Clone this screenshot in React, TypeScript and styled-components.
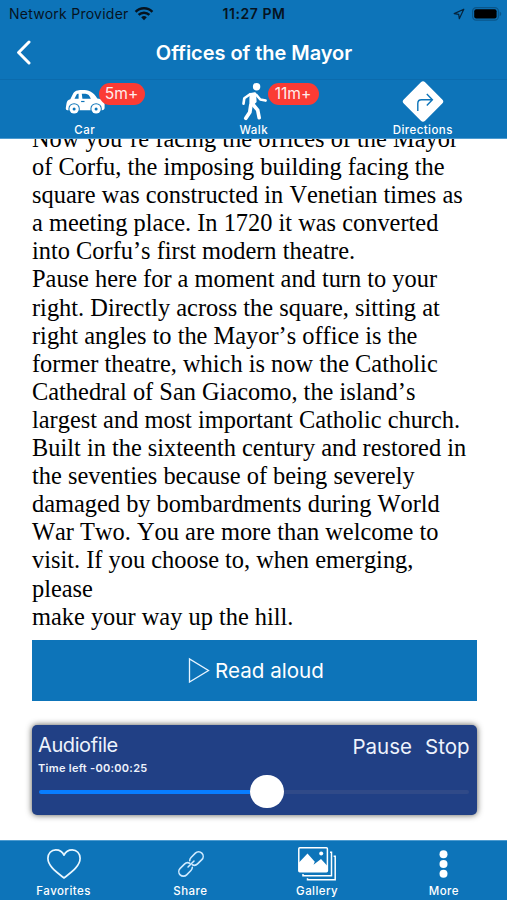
import React from 'react';
import styled, { createGlobalStyle } from 'styled-components';

const GlobalStyle = createGlobalStyle`
  * { box-sizing: border-box; }
  html, body { margin: 0; padding: 0; background: #fff; }
  button { border: 0; background: none; padding: 0; margin: 0; font: inherit; color: inherit; }
`;

const blue = '#0d74b9';

const Screen = styled.div`
  width: 507px;
  height: 900px;
  display: flex;
  flex-direction: column;
  overflow: hidden;
  background: #fff;
  color: #fff;
  font-family: Inter, sans-serif;
`;

const StatusBar = styled.div`
  height: 28px;
  flex: none;
  display: grid;
  grid-template-columns: 1fr auto 1fr;
  align-items: center;
  padding: 0 5px 1px 9px;
  background: ${blue};
  color: #06131f;
  font-size: 14px;
  line-height: 17px;
`;

const Carrier = styled.div`
  display: flex;
  align-items: center;
  gap: 5px;
  letter-spacing: 0.25px;
`;

const Clock = styled.div`
  font-weight: 600;
  letter-spacing: 0.55px;
  padding-right: 3px;
`;

const StatusIcons = styled.div`
  display: flex;
  justify-content: flex-end;
  align-items: center;
  gap: 7px;
`;

const NavBar = styled.header`
  height: 51px;
  flex: none;
  display: grid;
  grid-template-columns: 40px 1fr 40px;
  align-items: center;
  padding: 0 0 2px;
  background: ${blue};
`;

const BackButton = styled.button`
  display: flex;
  padding-left: 15px;
`;

const Title = styled.h1`
  margin: 0;
  padding-left: 1px;
  text-align: center;
  font-size: 20px;
  line-height: 24px;
  font-weight: 600;
  letter-spacing: -0.05px;
`;

const RouteBar = styled.nav`
  height: 60px;
  flex: none;
  display: grid;
  grid-template-columns: repeat(3, 1fr);
  background: ${blue};
  border-top: 1px solid #0b6bad;
  border-bottom: 1px solid #4d9bd0;
`;

const RouteItem = styled.button`
  display: flex;
  flex-direction: column;
  align-items: center;
`;

const RouteIcon = styled.span`
  position: relative;
  height: 43px;
  display: flex;
  align-items: center;
  justify-content: center;
`;

const Badge = styled.span<{ $left: number; $width: number }>`
  position: absolute;
  left: ${(p) => p.$left}px;
  top: 3px;
  width: ${(p) => p.$width}px;
  height: 22px;
  border-radius: 11px;
  background: #fb3b34;
  color: #ffeceb;
  font-size: 15.6px;
  line-height: 22px;
  text-align: center;
`;

const Caption = styled.span`
  font-size: 11.5px;
  line-height: 14px;
  font-weight: 500;
  letter-spacing: 0.45px;
  padding-left: 0.5px;
`;

const Content = styled.main`
  height: 701px;
  flex: none;
  display: flex;
  flex-direction: column;
  padding: 0 30.5px 0 31.5px;
  overflow: hidden;
`;

const Article = styled.article`
  flex: none;
  margin-top: -14px;
  padding-left: 0.5px;
  color: #000;
  font-family: 'Liberation Serif', serif;
  font-size: 24.4px;
  line-height: 28.1px;
  font-kerning: none;
  font-variant-ligatures: none;
  white-space: nowrap;
`;

const Line = styled.div`
  height: 28.1px;
`;

const ReadAloud = styled.button`
  flex: none;
  height: 61px;
  margin-top: 9px;
  display: flex;
  align-items: center;
  justify-content: center;
  gap: 5px;
  background: ${blue};
  font-size: 20.6px;
  padding-left: 4px;
`;

const Player = styled.section`
  flex: none;
  height: 90px;
  margin-top: 24.6px;
  padding: 7.5px 7px 0 6.5px;
  border-radius: 5px;
  background: #214085;
  box-shadow: 0 0 6px rgba(30, 30, 20, 0.75);
  color: #eef3fc;
`;

const PlayerHead = styled.div`
  display: flex;
  justify-content: space-between;
  height: 28px;
`;

const PlayerTitle = styled.div`
  font-size: 20px;
  line-height: 24px;
  letter-spacing: -0.4px;
`;

const PlayerActions = styled.div`
  display: flex;
  gap: 13px;
  padding-top: 1px;
  font-size: 20.5px;
  line-height: 24px;
`;

const TimeLeft = styled.div`
  font-size: 11px;
  line-height: 14px;
  font-weight: 600;
  letter-spacing: 0.28px;
`;

const Slider = styled.div`
  height: 34px;
  display: flex;
  align-items: center;
`;

const Elapsed = styled.div`
  width: 211px;
  height: 4px;
  margin-left: 1px;
  border-radius: 2px 0 0 2px;
  background: #087dff;
`;

const Thumb = styled.div`
  width: 33.5px;
  height: 33.5px;
  margin-top: -1px;
  border-radius: 50%;
  background: #fff;
`;

const Remaining = styled.div`
  flex: 1;
  height: 4px;
  margin-right: 1px;
  border-radius: 0 2px 2px 0;
  background: #304a88;
`;

const TabBar = styled.footer`
  height: 60px;
  flex: none;
  display: grid;
  grid-template-columns: repeat(4, 1fr);
  background: ${blue};
  border-top: 1px solid #4d9bd0;
`;

const Tab = styled.button`
  display: flex;
  flex-direction: column;
  align-items: center;
`;

const TabIcon = styled.span`
  height: 43px;
  display: flex;
  align-items: center;
  justify-content: center;
  padding: 2px 0 0 1px;
`;

const lines = [
  'Now you’re facing the offices of the Mayor',
  'of Corfu, the imposing building facing the',
  'square was constructed in Venetian times as',
  'a meeting place. In 1720 it was converted',
  'into Corfu’s first modern theatre.',
  'Pause here for a moment and turn to your',
  'right. Directly across the square, sitting at',
  'right angles to the Mayor’s office is the',
  'former theatre, which is now the Catholic',
  'Cathedral of San Giacomo, the island’s',
  'largest and most important Catholic church.',
  'Built in the sixteenth century and restored in',
  'the seventies because of being severely',
  'damaged by bombardments during World',
  'War Two. You are more than welcome to',
  'visit. If you choose to, when emerging,',
  'please',
  'make your way up the hill.',
];

const WifiIcon = () => (
  <svg width="20" height="14" viewBox="0 0 20 14">
    <path d="M10 13.2 7.2 10.3a4 4 0 0 1 5.6 0Z" fill="#06131f" />
    <path d="M4.6 7.9a7.6 7.6 0 0 1 10.8 0M1.6 4.8a11.9 11.9 0 0 1 16.8 0" fill="none" stroke="#06131f" strokeWidth="2.5" />
  </svg>
);

const LocationIcon = () => (
  <svg width="12" height="12" viewBox="0 0 12 12">
    <path d="M10.8 1.2 1.2 5.6l4.5.7.6 4.4Z" fill="none" stroke="#06233b" strokeWidth="1.2" strokeLinejoin="round" />
  </svg>
);

const BatteryIcon = () => (
  <svg width="30" height="14" viewBox="0 0 30 14">
    <rect x=".6" y=".6" width="25.8" height="12.6" rx="3.6" fill="none" stroke="#0a568a" strokeWidth="1.2" />
    <rect x="2.2" y="2.3" width="22.4" height="9.2" rx="2" fill="#000" />
    <path d="M27.6 4.5c2.2.9 2.2 3.9 0 4.8Z" fill="#0a568a" />
  </svg>
);

const BackIcon = () => (
  <svg width="16" height="26" viewBox="0 0 16 26">
    <path d="M14 2 3.600 12.500 14 23" fill="none" stroke="#fff" strokeWidth="3" strokeLinecap="round" strokeLinejoin="round" />
  </svg>
);

const CarIcon = () => (
  <svg width="40" height="27" viewBox="0 0 40 27">
    <g transform="translate(0.3 1.5)">
      <path
        d="M2.2 20.700C.8 20.500.4 19.600.5 18.500L1.200 14C1.600 11.500 3 10.300 5 9.800L8 3.800C9 2 10.200 1.200 12.300.9c5-.6 9.400-.4 12.700 1.200 2.800 1.400 5.200 3.900 7 6.800 4.200.4 6.800 2.200 7.300 5.700v3.600c0 1.500-.9 2.400-2.600 2.500Z"
        fill="#fff"
      />
      <path d="M9.200 9.300 11.200 5.200c.4-.7.800-.9 1.400-.9l.7-.1v5.100ZM16.500 4.200h3.700c2.600.2 4.100 1.700 5.400 5.100h-8.500Z" fill="#0d74b9" />
      <path d="M15.800 12h3.400" stroke="#0d74b9" strokeWidth="1.200" />
      <circle cx="8.800" cy="19.400" r="5.700" fill="#0d74b9" />
      <circle cx="30.800" cy="19.400" r="5.700" fill="#0d74b9" />
      <circle cx="8.800" cy="19.400" r="4.700" fill="#fff" />
      <circle cx="30.800" cy="19.400" r="4.700" fill="#fff" />
      <circle cx="8.800" cy="19.400" r="1.500" fill="#0d74b9" />
      <circle cx="30.800" cy="19.400" r="1.500" fill="#0d74b9" />
    </g>
  </svg>
);

const WalkIcon = () => (
  <svg width="28" height="39" viewBox="0 0 28 39" fill="none" stroke="#fff" strokeLinecap="round" strokeLinejoin="round">
    <circle cx="16.600" cy="4.700" r="3.700" fill="#fff" stroke="none" />
    <path d="M10.800 12.200 14.800 11.500 15.300 19.500 10.600 24Z" fill="#fff" strokeWidth="2.600" />
    <path d="M10 12.200 4.300 16.300 3.500 21.800" strokeWidth="2.600" />
    <path d="M16.500 13 20.300 17.500 25.600 18.600" strokeWidth="2.600" />
    <path d="M10.800 23.500 9.800 30.300 5.800 36.200" strokeWidth="3.800" />
    <path d="M13 22.500 17.700 28.200 19.200 35.800" strokeWidth="3.600" />
  </svg>
);

const DirectionsIcon = () => (
  <svg width="42" height="43" viewBox="0 0 42 43" fill="none">
    <rect x="5.900" y="6.400" width="30.200" height="30.200" rx="3" transform="rotate(45 21 21.500)" fill="#fff" />
    <path d="M15.800 31v-7.500c0-2.500 1.300-3.700 3.700-3.700h10.700M24.800 14l5.600 5.800-5.600 5.800" stroke="#0d74b9" strokeWidth="1.400" />
  </svg>
);

const PlayIcon = () => (
  <svg width="22" height="26" viewBox="0 0 22 26">
    <path d="M1.500 2v23l19-11.500Z" fill="none" stroke="#e8f4ff" strokeWidth="1.300" strokeLinejoin="miter" />
  </svg>
);

const HeartIcon = () => (
  <svg width="36" height="32" viewBox="0 0 36 32">
    <path
      d="M18 30C10 23.800 1.900 18 1.900 10.300 1.900 5.300 5.300 1.900 9.800 1.900c3.700 0 6.700 2 8.200 5.300 1.500-3.300 4.500-5.300 8.200-5.300 4.500 0 7.900 3.400 7.900 8.400C34.100 18 26 23.800 18 30Z"
      fill="none"
      stroke="#e9f7ff"
      strokeWidth="1.700"
      strokeLinejoin="round"
    />
  </svg>
);

const LinkIcon = () => (
  <svg width="28" height="28" viewBox="0 0 30 30" fill="none" stroke="#cfeaff" strokeWidth="1.700" strokeLinecap="round">
    <g transform="rotate(-45 15 15)">
      <path d="M13.500 18.500a5 5 0 0 1-3.500 1.400H3.500a4.900 4.900 0 0 1 0-9.800H10a4.900 4.900 0 0 1 4.600 3.400" />
      <path d="M16.500 11.500a5 5 0 0 1 3.500-1.400h6.500a4.900 4.900 0 0 1 0 9.800H20a4.900 4.900 0 0 1-4.600-3.400" />
      <path d="M10.500 15h9" />
    </g>
  </svg>
);

const GalleryIcon = () => (
  <svg width="38" height="34" viewBox="0 0 38 34" fill="none" stroke="#fff">
    <rect x=".8" y=".8" width="28.600" height="24" rx="1" strokeWidth="1.500" />
    <path d="M1 15.500 9.500 6.500l7.300 8.200-1.300 3.100L23 12l6 6.500v6.300H1Z" fill="#fff" stroke="none" />
    <circle cx="23.200" cy="6.500" r="2" fill="#fff" stroke="none" />
    <path d="M32 5.200h1.500v23.500H5v-1.600" strokeWidth="1.500" />
    <path d="M35.600 9.300h1.600v23.500H9.500v-1.600" strokeWidth="1.500" />
  </svg>
);

const MoreIcon = () => (
  <svg width="10" height="28" viewBox="0 0 10 28" fill="#fff">
    <circle cx="4.500" cy="4.200" r="4" />
    <circle cx="4.500" cy="14" r="4" />
    <circle cx="4.500" cy="23.800" r="4" />
  </svg>
);

export default function App() {
  return (
    <Screen>
      <GlobalStyle />
      <StatusBar>
        <Carrier>
          Network Provider
          <WifiIcon />
        </Carrier>
        <Clock>11:27 PM</Clock>
        <StatusIcons>
          <LocationIcon />
          <BatteryIcon />
        </StatusIcons>
      </StatusBar>
      <NavBar>
        <BackButton aria-label="Back">
          <BackIcon />
        </BackButton>
        <Title>Offices of the Mayor</Title>
      </NavBar>
      <RouteBar>
        <RouteItem>
          <RouteIcon>
            <CarIcon />
            <Badge $left={34} $width={46}>5m+</Badge>
          </RouteIcon>
          <Caption>Car</Caption>
        </RouteItem>
        <RouteItem>
          <RouteIcon>
            <WalkIcon />
            <Badge $left={28} $width={51}>11m+</Badge>
          </RouteIcon>
          <Caption>Walk</Caption>
        </RouteItem>
        <RouteItem>
          <RouteIcon>
            <DirectionsIcon />
          </RouteIcon>
          <Caption>Directions</Caption>
        </RouteItem>
      </RouteBar>
      <Content>
        <Article>
          {lines.map((line) => (
            <Line key={line}>{line}</Line>
          ))}
        </Article>
        <ReadAloud>
          <PlayIcon />
          Read aloud
        </ReadAloud>
        <Player>
          <PlayerHead>
            <PlayerTitle>Audiofile</PlayerTitle>
            <PlayerActions>
              <button>Pause</button>
              <button>Stop</button>
            </PlayerActions>
          </PlayerHead>
          <TimeLeft>Time left -00:00:25</TimeLeft>
          <Slider>
            <Elapsed />
            <Thumb />
            <Remaining />
          </Slider>
        </Player>
      </Content>
      <TabBar>
        <Tab>
          <TabIcon>
            <HeartIcon />
          </TabIcon>
          <Caption>Favorites</Caption>
        </Tab>
        <Tab>
          <TabIcon>
            <LinkIcon />
          </TabIcon>
          <Caption>Share</Caption>
        </Tab>
        <Tab>
          <TabIcon>
            <GalleryIcon />
          </TabIcon>
          <Caption>Gallery</Caption>
        </Tab>
        <Tab>
          <TabIcon>
            <MoreIcon />
          </TabIcon>
          <Caption>More</Caption>
        </Tab>
      </TabBar>
    </Screen>
  );
}
